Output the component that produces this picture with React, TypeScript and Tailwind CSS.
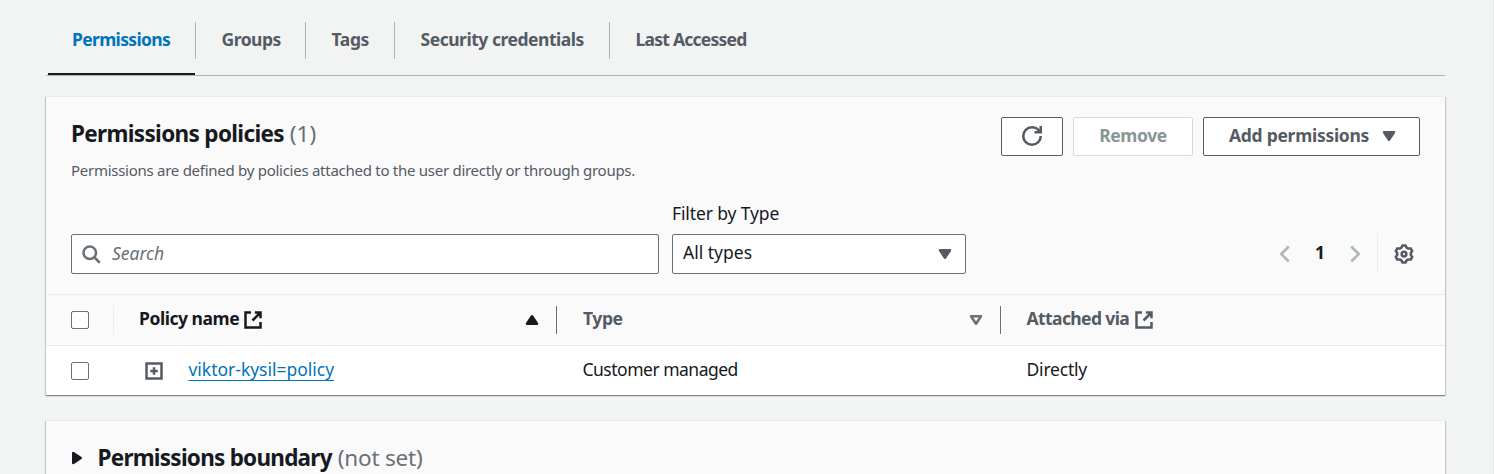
import type { ReactNode } from "react";

const panel =
  "bg-[#fafafa] border-t border-[#eaeded] shadow-[0_1px_1px_0_rgba(0,28,36,0.3),1px_1px_1px_0_rgba(0,28,36,0.15),-1px_1px_1px_0_rgba(0,28,36,0.15)]";

type IconProps = { children: ReactNode; className?: string };

function Icon({ children, className = "" }: IconProps) {
  return (
    <svg
      viewBox="0 0 16 16"
      className={`h-5 w-5 shrink-0 ${className}`}
      fill="none"
      stroke="currentColor"
      strokeWidth={2}
    >
      {children}
    </svg>
  );
}

function CaretDown({ className = "" }: { className?: string }) {
  return (
    <Icon className={className}>
      <path d="M4 5h8l-4 6-4-6z" fill="currentColor" strokeLinejoin="round" />
    </Icon>
  );
}

function ExternalIcon({ className = "" }: { className?: string }) {
  return (
    <Icon className={className}>
      <path d="M9.5 2H14v4.5M7.6 8.4 14 2M14 9.6V14H2V2h4.4" />
    </Icon>
  );
}

function gearPath() {
  const points: string[] = [];
  const add = (angle: number, radius: number) => {
    const a = (angle * Math.PI) / 180;
    points.push(`${(8 + radius * Math.cos(a)).toFixed(2)} ${(8 + radius * Math.sin(a)).toFixed(2)}`);
  };
  for (let lobe = 0; lobe < 6; lobe++) {
    const middle = -90 + lobe * 60;
    add(middle - 22, 5.5);
    add(middle - 10, 7);
    add(middle + 10, 7);
    add(middle + 22, 5.5);
  }
  return `M${points.join("L")}Z`;
}

function GearIcon() {
  return (
    <Icon className="text-[#545b64]">
      <path d={gearPath()} strokeLinejoin="round" />
      <circle cx="8" cy="8" r="1.9" />
    </Icon>
  );
}

function Checkbox() {
  return <span className="block h-[18px] w-[18px] shrink-0 rounded-[2px] border border-[#687078] bg-white" />;
}

const tabs = [
  { name: "Groups", style: "w-[110px] tracking-[-0.5px]" },
  { name: "Tags", style: "w-[89px] tracking-[-0.4px]" },
  { name: "Security credentials", style: "w-[215px] tracking-[-0.47px]" },
  { name: "Last Accessed", style: "w-[163px] tracking-[-0.76px]" },
];

function Tabs() {
  return (
    <nav className="flex h-[76px] border-b border-[#aab7b8] pt-[22px] font-bold text-[#545b64]">
      <div className="ml-[2px] flex w-[147px] flex-col justify-between border-b-2 border-[#16191f] pl-[24px] text-[#0073bb]">
        <span className="tracking-[-0.66px] leading-[35px]">Permissions</span>
      </div>
      {tabs.map((tab) => (
        <div key={tab.name} className={`h-[37px] whitespace-nowrap border-l border-[#aab7b8] pl-[25.5px] leading-[35px] ${tab.style}`}>
          {tab.name}
        </div>
      ))}
    </nav>
  );
}

function PanelHeader() {
  return (
    <div className="flex h-[97px] justify-between pl-[25px] pr-[25px] pt-5">
      <div>
        <h2 className="pt-px text-[22.5px] font-bold leading-8 tracking-[-0.66px]">
          Permissions policies<span className="ml-[6px] font-normal tracking-normal text-[#687078]">(1)</span>
        </h2>
        <p className="mt-[10px] text-[15px] leading-5 tracking-[-0.27px] text-[#545b64]">
          Permissions are defined by policies attached to the user directly or through groups.
        </p>
      </div>
      <div className="flex gap-[10px] font-bold leading-[35px]">
        <button className="flex h-[39px] w-[62px] items-center justify-center rounded-[2px] border border-[#545b64] bg-white text-[#545b64]">
          <Icon className="-mt-px">
            <path d="M10 5h5V0M15 8a6.957 6.957 0 0 1-7 7 6.957 6.957 0 0 1-7-7 6.957 6.957 0 0 1 7-7 6.87 6.87 0 0 1 6.3 4" />
          </Icon>
        </button>
        <button className="h-[39px] w-[120px] rounded-[2px] border border-[#d5dbdb] bg-white pb-[2px] tracking-[-0.4px] text-[#879596]">
          Remove
        </button>
        <button className="flex h-[39px] w-[217px] rounded-[2px] border border-[#545b64] bg-white pl-[25px] tracking-[-0.28px] text-[#545b64]">
          <span className="w-[150px] text-left">Add permissions</span>
          <CaretDown className="mt-2" />
        </button>
      </div>
    </div>
  );
}

function Filters() {
  return (
    <div className="flex h-[100px] items-start pl-[25px] pr-[31px]">
      <div className="mt-10 flex h-10 w-[588px] items-center rounded-[2px] border border-[#687078] bg-white pl-[9px] text-[#687078]">
        <Icon>
          <circle cx="7" cy="7" r="5" />
          <path d="m11 11 4 4" />
        </Icon>
        <span className="ml-[11px] pb-[3px] italic">Search</span>
      </div>
      <div className="ml-[13px] w-[294px]">
        <div className="h-10 pt-[7px] leading-6 tracking-[-0.12px]">Filter by Type</div>
        <div className="flex h-10 items-center justify-between rounded-[2px] border border-[#687078] bg-white pl-[10px] pr-[10px]">
          <span className="pb-1">All types</span>
          <CaretDown className="text-[#545b64]" />
        </div>
      </div>
      <div className="ml-auto mt-10 flex h-10 items-center">
        <Icon className="text-[#aab7b8]">
          <path d="M11 2 5 8l6 6" />
        </Icon>
        <span className="w-[50px] pb-1 text-center font-bold">1</span>
        <Icon className="text-[#aab7b8]">
          <path d="m5 2 6 6-6 6" />
        </Icon>
        <span className="ml-[12px] h-10 w-px bg-[#eaeded]" />
        <span className="ml-4">
          <GearIcon />
        </span>
      </div>
    </div>
  );
}

const columns = "grid grid-cols-[68px_443px_444px_444px]";

function PolicyTable() {
  return (
    <div>
      <div className={`${columns} h-[52px] border-y border-[#eaeded] font-bold text-[#545b64]`}>
        <div className="my-[11px] flex items-center border-r border-[#eaeded] pl-[25px]">
          <Checkbox />
        </div>
        <div className="my-[11px] flex items-center justify-between border-r border-[#687078] pl-[25px] pr-[14px] text-[#16191f]">
          <span className="flex items-center">
            <span className="pb-[5px] tracking-[-0.46px]">Policy name</span>
            <ExternalIcon className="ml-[4px]" />
          </span>
          <Icon>
            <path d="M4 11h8L8 5l-4 6z" fill="currentColor" strokeLinejoin="round" />
          </Icon>
        </div>
        <div className="my-[11px] flex items-center justify-between border-r border-[#687078] pl-[26px] pr-[14px]">
          <span className="pb-1 tracking-[-0.4px]">Type</span>
          <Icon className="text-[#687078]">
            <path d="M4 5h8l-4 6-4-6z" strokeLinejoin="round" />
          </Icon>
        </div>
        <div className="my-[11px] flex items-center pl-[25.5px]">
          <span className="pb-[5px] tracking-[-0.6px]">Attached via</span>
          <ExternalIcon className="ml-[5px]" />
        </div>
      </div>
      <div className={`${columns} h-[49px] items-center bg-white`}>
        <div className="pl-[25px]">
          <Checkbox />
        </div>
        <div className="flex items-center pl-[30px]">
          <Icon className="text-[#545b64]">
            <path d="M2 2h12v12H2zM8 5v6M5 8h6" />
          </Icon>
          <a className="ml-[24.5px] pb-[3px] tracking-[-0.02px] text-[#0073bb] underline decoration-1 underline-offset-[4px] [text-decoration-skip-ink:none]">
            viktor-kysil=policy
          </a>
        </div>
        <div className="pb-[3px] pl-[25.5px] tracking-[-0.5px]">Customer managed</div>
        <div className="pb-[3px] pl-[25.5px] tracking-[-0.2px]">Directly</div>
      </div>
    </div>
  );
}

export default function App() {
  return (
    <div className="h-[474px] overflow-hidden border-r border-[#e4e7e7] bg-[#f2f3f3] pl-[46px] pr-12 font-['Noto_Sans',sans-serif] text-[17.5px] leading-[22px] text-[#16191f]">
      <Tabs />
      <section className={`${panel} mt-5`}>
        <PanelHeader />
        <Filters />
        <PolicyTable />
      </section>
      <section className={`${panel} mt-[25px] flex h-[80px] pl-[21px] pt-5`}>
        <Icon className="mt-[7px]">
          <path d="M5 4v8l6-4-6-4z" fill="currentColor" strokeLinejoin="round" />
        </Icon>
        <h2 className="ml-[10.5px] pt-px text-[22.5px] font-bold leading-8 tracking-[-0.76px]">
          Permissions boundary<span className="ml-[6px] font-normal tracking-[-0.2px] text-[#687078]">(not set)</span>
        </h2>
      </section>
    </div>
  );
}
